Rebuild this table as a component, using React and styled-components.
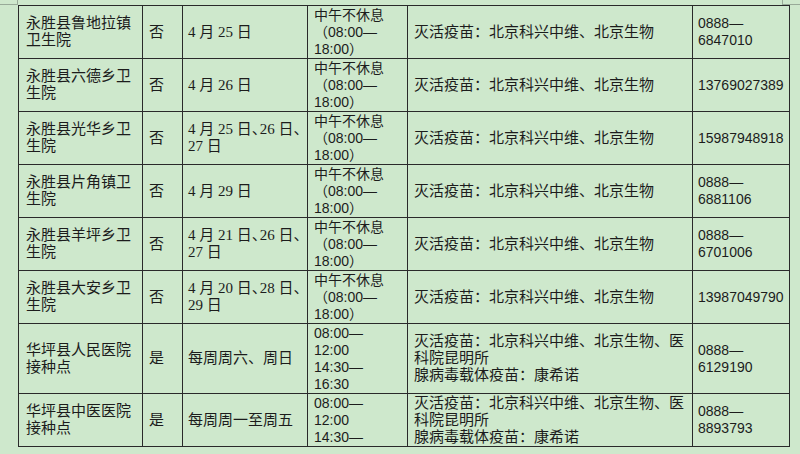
import React from "react";
import styled, { createGlobalStyle } from "styled-components";

const TIME_NOON = ["中午不休息", "（08:00—", "18:00）"];
const TIME_SPLIT = ["08:00—", "12:00", "14:30—", "16:30"];
const VAC_A = ["灭活疫苗：北京科兴中维、北京生物"];
const VAC_B = ["灭活疫苗：北京科兴中维、北京生物、医", "科院昆明所", "腺病毒载体疫苗：康希诺"];

const colWidths = [124, 40, 125, 100, 285, 97];

// last row runs into the page break, only the first three time lines show
const rows = [
  { h: 53, name: ["永胜县鲁地拉镇", "卫生院"], yn: "否", date: [["4 月 25 日"]], time: TIME_NOON, vac: VAC_A, tel: ["0888—", "6847010"] },
  { h: 53, name: ["永胜县六德乡卫", "生院"], yn: "否", date: [["4 月 26 日"]], time: TIME_NOON, vac: VAC_A, tel: ["13769027389"] },
  { h: 52, name: ["永胜县光华乡卫", "生院"], yn: "否", date: [["4 月 25 日", "26 日", ""], ["27 日"]], time: TIME_NOON, vac: VAC_A, tel: ["15987948918"] },
  { h: 53, name: ["永胜县片角镇卫", "生院"], yn: "否", date: [["4 月 29 日"]], time: TIME_NOON, vac: VAC_A, tel: ["0888—", "6881106"] },
  { h: 53, name: ["永胜县羊坪乡卫", "生院"], yn: "否", date: [["4 月 21 日", "26 日", ""], ["27 日"]], time: TIME_NOON, vac: VAC_A, tel: ["0888—", "6701006"] },
  { h: 53, name: ["永胜县大安乡卫", "生院"], yn: "否", date: [["4 月 20 日", "28 日", ""], ["29 日"]], time: TIME_NOON, vac: VAC_A, tel: ["13987049790"] },
  { h: 69, name: ["华坪县人民医院", "接种点"], yn: "是", date: [["每周周六、周日"]], time: TIME_SPLIT, vac: VAC_B, tel: ["0888—", "6129190"] },
  { h: 52, name: ["华坪县中医医院", "接种点"], yn: "是", date: [["每周周一至周五"]], time: TIME_SPLIT.slice(0, 3), vac: VAC_B, tel: ["0888—", "8893793"] },
];

const GlobalStyle = createGlobalStyle`
  html, body {
    margin: 0;
    background: #cee8cc;
  }
  body {
    width: 800px;
    height: 454px;
    overflow: hidden;
  }
`;

const Page = styled.div`
  position: relative;
  padding: 5px 0 0 18px;
  height: 449px;

  /* word page crop marks */
  &::before {
    content: "";
    position: absolute;
    left: 0;
    top: 0;
    width: 17px;
    height: 4px;
    border-right: 1px solid #98aa98;
    border-bottom: 1px solid #98aa98;
  }
  &::after {
    content: "";
    position: absolute;
    left: 782px;
    top: 0;
    width: 18px;
    height: 4px;
    border-left: 1px solid #98aa98;
    border-bottom: 1px solid #98aa98;
  }
`;

const Table = styled.table`
  position: relative;
  z-index: 1;
  border-collapse: collapse;
  table-layout: fixed;
  width: 771px;
  font-family: "Liberation Serif", "Noto Sans CJK SC", serif;
  font-size: 15px;
  line-height: 17px;
  color: #1c1c1c;
  background: #cee8cc;
`;

const Col = styled.col`
  width: ${(p) => p.$w}px;
`;

const Row = styled.tr`
  height: ${(p) => p.$h}px;
`;

const Cell = styled.td`
  border: 1px solid #2a2a2a;
  padding: 0 0 0 ${(p) => p.$pl || 6}px;
  vertical-align: ${(p) => (p.$top ? "top" : "middle")};
  white-space: nowrap;
`;

const Lines = styled.div`
  padding-top: ${(p) => (p.$top ? 1 : 0)}px;
  font-family: ${(p) =>
    p.$sans
      ? `"Liberation Sans", "Noto Sans CJK SC", sans-serif`
      : `"Liberation Serif", "Noto Sans CJK SC", serif`};
  font-size: ${(p) => (p.$sans ? "14px" : "15px")};
  line-height: 17px;
`;

const Line = styled.div`
  height: 17px;
`;

/* word squeezes the ideographic comma between dates */
const Comma = styled.span`
  letter-spacing: -7px;
`;

const Stack = ({ lines, ...rest }) => (
  <Lines {...rest}>
    {lines.map((t, i) => (
      <Line key={i}>{t}</Line>
    ))}
  </Lines>
);

const DateStack = ({ lines }) => (
  <Lines>
    {lines.map((parts, i) => (
      <Line key={i}>
        {parts.map((p, j) => (
          <React.Fragment key={j}>
            {j > 0 && <Comma>、</Comma>}
            {p}
          </React.Fragment>
        ))}
      </Line>
    ))}
  </Lines>
);

export default function App() {
  return (
    <>
      <GlobalStyle />
      <Page>
        <Table>
          <colgroup>
            {colWidths.map((w, i) => (
              <Col key={i} $w={w} />
            ))}
          </colgroup>
          <tbody>
            {rows.map((r, i) => (
              <Row key={i} $h={r.h}>
                <Cell $pl={7}>
                  <Stack lines={r.name} />
                </Cell>
                <Cell $pl={6}>{r.yn}</Cell>
                <Cell $pl={5}>
                  <DateStack lines={r.date} />
                </Cell>
                <Cell $pl={6} $top>
                  <Stack lines={r.time} $sans $top />
                </Cell>
                <Cell $pl={6}>
                  <Stack lines={r.vac} />
                </Cell>
                <Cell $pl={5}>
                  <Stack lines={r.tel} $sans />
                </Cell>
              </Row>
            ))}
          </tbody>
        </Table>
      </Page>
    </>
  );
}
